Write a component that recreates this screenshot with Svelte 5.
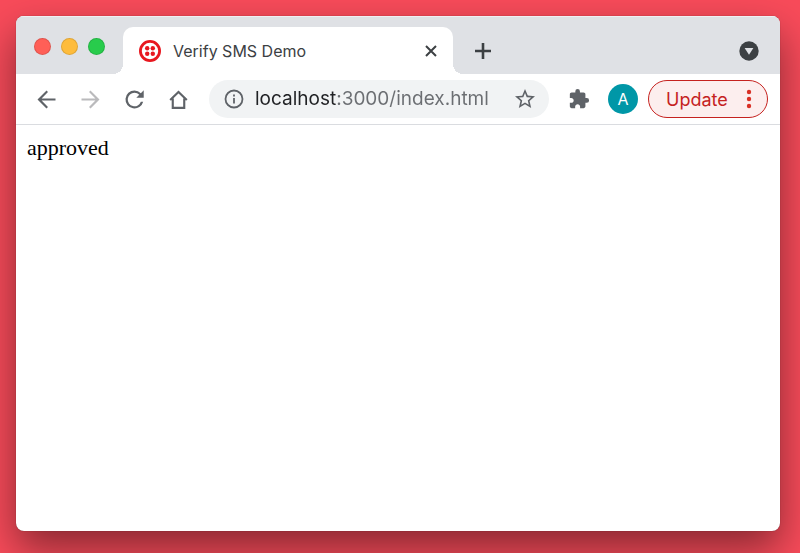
<script lang="ts">
  let url = $state('localhost:3000/index.html');
  const title = 'Verify SMS Demo';
  const status = 'approved';
  const lights = ['close', 'minimize', 'zoom'];
</script>

<div class="desktop">
  <div class="window">
    <header class="tab-strip">
      <div class="lights">
        {#each lights as light}
          <button class="light {light}" aria-label={light}></button>
        {/each}
      </div>

      <div class="tab">
        <svg class="favicon" viewBox="0 0 22 22" aria-hidden="true">
          <circle cx="11" cy="11" r="9.6" fill="none" stroke="#e8171f" stroke-width="2.8" />
          <circle cx="8.2" cy="8.2" r="2.2" />
          <circle cx="13.8" cy="8.2" r="2.2" />
          <circle cx="8.2" cy="13.8" r="2.2" />
          <circle cx="13.8" cy="13.8" r="2.2" />
        </svg>
        <span class="tab-title">{title}</span>
        <button class="icon-btn close-tab" aria-label="Close tab">
          <svg width="12" height="12" viewBox="0 0 12 12">
            <path d="M1 1l10 10M11 1L1 11" fill="none" stroke="#3c4043" stroke-width="2" />
          </svg>
        </button>
      </div>

      <button class="icon-btn new-tab" aria-label="New tab">
        <svg width="16" height="16" viewBox="0 0 16 16">
          <path d="M8 0v16M0 8h16" fill="none" stroke="#3c4043" stroke-width="2.6" />
        </svg>
      </button>

      <button class="icon-btn tab-search" aria-label="Search tabs">
        <svg width="20" height="20" viewBox="0 0 20 20">
          <circle cx="10" cy="10" r="9.7" fill="#3c4043" />
          <path d="M5.6 7h8.8L10 13.8z" fill="#dfe1e5" />
        </svg>
      </button>
    </header>

    <nav class="toolbar">
      <div class="nav-buttons">
        <button class="icon-btn nav-btn" aria-label="Back">
          <svg viewBox="0 0 24 24"><path d="M20 11.1H7.65l5.67-5.69L12 4l-8 8 8 8 1.32-1.41L7.65 12.9H20z" /></svg>
        </button>
        <button class="icon-btn nav-btn inactive" aria-label="Forward">
          <svg viewBox="0 0 24 24"><path d="M4 11.1h12.35l-5.67-5.69L12 4l8 8-8 8-1.32-1.41 5.67-5.69H4z" /></svg>
        </button>
        <button class="icon-btn nav-btn" aria-label="Reload">
          <svg viewBox="0 0 24 24"><path d="M17.65 6.35A7.96 7.96 0 0 0 12 4a8 8 0 1 0 7.73 10h-2.08A6 6 0 1 1 12 6c1.66 0 3.14.69 4.22 1.78L13.6 10.4H20.2V3.8z" /></svg>
        </button>
        <button class="icon-btn nav-btn" aria-label="Home">
          <svg viewBox="0 0 24 24">
            <path d="M4.6 12.4L12 5.4l7.4 7M6.9 11v8.5h10.2V11" fill="none" stroke="#5f6368" stroke-width="1.9" />
          </svg>
        </button>
      </div>

      <div class="omnibox">
        <svg class="info" width="20" height="20" viewBox="0 0 20 20" aria-hidden="true">
          <circle cx="10" cy="10" r="8.5" fill="none" stroke="#5f6368" stroke-width="1.8" />
          <path d="M9.1 9h1.8v5.4H9.1zM9.1 5.6h1.8v1.8H9.1z" fill="#5f6368" />
        </svg>
        <input class="url" type="text" aria-label="Address" spellcheck="false" bind:value={url} />
        <button class="icon-btn bookmark" aria-label="Bookmark this page">
          <svg viewBox="0 0 24 24"><path d="M22 9.24l-7.19-.62L12 2 9.19 8.63 2 9.24l5.46 4.73L5.82 21 12 17.27 18.18 21l-1.63-7.03L22 9.24zM12 15.4l-3.76 2.27 1-4.28-3.32-2.88 4.38-.38L12 6.1l1.71 4.04 4.38.38-3.32 2.88 1 4.28L12 15.4z" /></svg>
        </button>
      </div>

      <button class="icon-btn extensions" aria-label="Extensions">
        <svg viewBox="0 0 24 24"><path d="M20.5 11H19V7c0-1.1-.9-2-2-2h-4V3.5a2.5 2.5 0 0 0-5 0V5H4c-1.1 0-1.99.9-1.99 2v3.8H3.5c1.49 0 2.7 1.21 2.7 2.7s-1.21 2.7-2.7 2.7H2V20c0 1.1.9 2 2 2h3.8v-1.5c0-1.49 1.21-2.7 2.7-2.7s2.7 1.21 2.7 2.7V22H17c1.1 0 2-.9 2-2v-4h1.5a2.5 2.5 0 0 0 0-5z" /></svg>
      </button>
      <button class="avatar" aria-label="Profile">A</button>
      <button class="update">
        <span>Update</span>
        <svg width="6" height="20" viewBox="0 0 6 20" aria-hidden="true">
          <circle cx="3" cy="3" r="2.2" />
          <circle cx="3" cy="10" r="2.2" />
          <circle cx="3" cy="17" r="2.2" />
        </svg>
      </button>
    </nav>

    <main class="page">{status}</main>
  </div>
</div>

<style>
  :global(body) {
    margin: 0;
    background: #f84b5a;
  }

  .desktop {
    box-sizing: border-box;
    min-height: 100vh;
    padding: 16px 20px 22px 16px;
    display: flex;
    overflow: hidden;
    font-family: Inter, 'Liberation Sans', sans-serif;
  }

  .window {
    flex: 1;
    min-width: 0;
    display: flex;
    flex-direction: column;
    background: #fff;
    border-radius: 8px;
    overflow: hidden;
    box-shadow:
      0 0 1px rgba(0, 0, 0, 0.5),
      0 18px 40px rgba(0, 0, 0, 0.45);
  }

  button {
    margin: 0;
    padding: 0;
    border: 0;
    background: none;
    font-family: inherit;
    cursor: pointer;
  }

  .icon-btn {
    display: flex;
    align-items: center;
    justify-content: center;
    flex: none;
    fill: #5f6368;
  }

  /* Tab strip */
  .tab-strip {
    display: flex;
    align-items: flex-end;
    height: 58px;
    background: #dfe1e5;
    box-shadow: inset 0 1px #eff0f3;
  }

  .lights {
    display: flex;
    align-items: center;
    gap: 10px;
    height: 56px;
    padding: 0 18px;
  }

  .light {
    box-sizing: border-box;
    width: 17px;
    height: 17px;
    border: 1px solid rgba(0, 0, 0, 0.12);
    border-radius: 50%;
  }

  .close {
    background: #ff5f57;
  }

  .minimize {
    background: #febc3c;
  }

  .zoom {
    background: #28cc4c;
  }

  .tab {
    position: relative;
    box-sizing: border-box;
    display: flex;
    align-items: center;
    flex: 0 1 330px;
    height: 47px;
    padding: 0 12px 0 16px;
    background: #fff;
    border-radius: 10px 10px 0 0;
  }

  /* curved feet on both sides of the active tab */
  .tab::before,
  .tab::after {
    content: '';
    position: absolute;
    bottom: 0;
    width: 10px;
    height: 10px;
  }

  .tab::before {
    right: 100%;
    background: radial-gradient(circle at 0 0, transparent 10px, #fff 10px);
  }

  .tab::after {
    left: 100%;
    background: radial-gradient(circle at 100% 0, transparent 10px, #fff 10px);
  }

  .favicon {
    width: 22px;
    height: 22px;
    margin-right: 12px;
    fill: #e8171f;
  }

  .tab-title {
    flex: 1;
    color: #3c4043;
    font-size: 16px;
    white-space: nowrap;
  }

  .close-tab {
    width: 20px;
    height: 20px;
  }

  .new-tab {
    width: 60px;
    height: 47px;
  }

  .tab-search {
    height: 47px;
    margin-left: auto;
    margin-right: 21px;
  }

  /* Toolbar */
  .toolbar {
    display: flex;
    align-items: center;
    height: 50px;
    padding-right: 12px;
    border-bottom: 1px solid #dadce0;
  }

  .nav-buttons {
    display: flex;
    padding: 0 9px 0 8px;
  }

  .nav-btn {
    width: 44px;
    height: 38px;
  }

  .nav-btn svg {
    width: 27px;
    height: 27px;
  }

  .inactive {
    fill: #bababc;
  }

  .omnibox {
    box-sizing: border-box;
    flex: 1;
    min-width: 0;
    display: flex;
    align-items: center;
    height: 38px;
    padding: 0 12px 0 15px;
    background: #f1f3f4;
    border-radius: 19px;
  }

  .info {
    flex: none;
    margin-right: 11px;
  }

  .url {
    flex: 1;
    min-width: 0;
    padding: 0;
    border: 0;
    outline: 0;
    font-family: inherit;
    font-size: 19px;
    line-height: 24px;
    /* dark host, grey port and path */
    color: transparent;
    caret-color: #202124;
    background: linear-gradient(90deg, #202124 82px, #6b6e72 82px);
    background-clip: text;
  }

  .bookmark svg {
    width: 24px;
    height: 24px;
  }

  .extensions {
    width: 59px;
  }

  .extensions svg {
    width: 22px;
    height: 22px;
  }

  .avatar {
    flex: none;
    width: 30px;
    height: 30px;
    margin-right: 10px;
    border-radius: 50%;
    background: #0097a7;
    color: #fff;
    font-size: 16px;
    line-height: 30px;
  }

  .update {
    box-sizing: border-box;
    flex: none;
    display: flex;
    align-items: center;
    justify-content: space-between;
    width: 120px;
    height: 38px;
    padding: 0 15px 0 17px;
    border: 1px solid #c5221f;
    border-radius: 19px;
    background: #fceeee;
    color: #c5221f;
    font-size: 18px;
  }

  .update svg {
    fill: #d93025;
  }

  /* Page content */
  .page {
    flex: 1;
    padding: 10px 11px;
    color: #000;
    font-family: 'Liberation Serif', serif;
    font-size: 22px;
    line-height: 25px;
  }
</style>
